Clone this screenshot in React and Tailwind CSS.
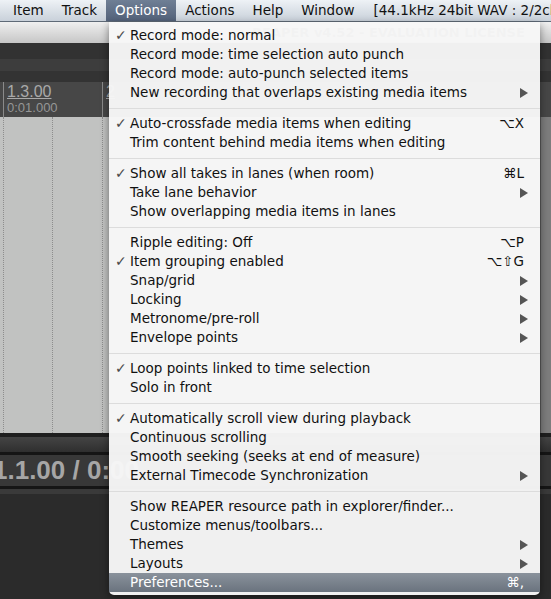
import React from "react";

const menuBar = ["Item", "Track", "Options", "Actions", "Help", "Window"];

// each entry: [label, checked, shortcut, hasSubmenu, active] ; "-" is a separator
const items = [
  ["Record mode: normal", true],
  ["Record mode: time selection auto punch"],
  ["Record mode: auto-punch selected items"],
  ["New recording that overlaps existing media items", false, null, true],
  "-",
  ["Auto-crossfade media items when editing", true, "⌥X"],
  ["Trim content behind media items when editing"],
  "-",
  ["Show all takes in lanes (when room)", true, "⌘L"],
  ["Take lane behavior", false, null, true],
  ["Show overlapping media items in lanes"],
  "-",
  ["Ripple editing: Off", false, "⌥P"],
  ["Item grouping enabled", true, "⌥⇧G"],
  ["Snap/grid", false, null, true],
  ["Locking", false, null, true],
  ["Metronome/pre-roll", false, null, true],
  ["Envelope points", false, null, true],
  "-",
  ["Loop points linked to time selection", true],
  ["Solo in front"],
  "-",
  ["Automatically scroll view during playback", true],
  ["Continuous scrolling"],
  ["Smooth seeking (seeks at end of measure)"],
  ["External Timecode Synchronization", false, null, true],
  "-",
  ["Show REAPER resource path in explorer/finder..."],
  ["Customize menus/toolbars..."],
  ["Themes", false, null, true],
  ["Layouts", false, null, true],
  ["Preferences...", false, "⌘,", false, true],
];

function Arrow({ light }) {
  return (
    <svg width="8" height="10" viewBox="0 0 8 10">
      <polygon points="0,0 8,5 0,10" fill={light ? "#fff" : "#555"} />
    </svg>
  );
}

function MenuRow({ item }) {
  const [label, checked, shortcut, sub, active] = item;
  return (
    <div
      className={
        "relative flex items-center h-[19px] pl-[21px] pr-[12px] " +
        (active
          ? "bg-gradient-to-b from-[#8a929c] to-[#6a737e] text-white"
          : "text-[#111]")
      }
    >
      {checked && (
        <span className="absolute left-[6px] top-[0px] text-[14px] text-[#4a4a4a]">
          ✓
        </span>
      )}
      <span className="flex-1 whitespace-nowrap">{label}</span>
      {shortcut && <span className="pr-[4px] whitespace-nowrap">{shortcut}</span>}
      {sub && <Arrow light={active} />}
    </div>
  );
}

export default function App() {
  return (
    <div className="relative w-[551px] h-[599px] overflow-hidden bg-[#2b2b2b] font-['DejaVu_Sans',sans-serif] text-[13.5px] leading-[19px]">
      {/* menu bar */}
      <div className="flex h-[22px] pl-[4px] bg-gradient-to-b from-[#eef2f6] to-[#c9d1da] border-b border-[#5f6a77] text-[#111] overflow-hidden">
        {menuBar.map((m) => (
          <div
            key={m}
            className={
              "px-[9px] h-[21px] flex items-center " +
              (m === "Options"
                ? "bg-gradient-to-b from-[#6f7f95] to-[#53627a] text-white"
                : "")
            }
          >
            {m}
          </div>
        ))}
        <div className="pl-[10px] h-[21px] flex items-center whitespace-nowrap">
          [44.1kHz 24bit WAV : 2/2ch]
        </div>
      </div>

      {/* title bar */}
      <div className="h-[21px] bg-gradient-to-b from-[#f0f0f0] to-[#c6c6c6] pl-[252px] flex items-center text-[13px] font-bold text-[#6a6a6a] whitespace-nowrap">
        REAPER v4.52 - EVALUATION LICENSE
      </div>

      {/* toolbars */}
      <div className="h-[16px] bg-[#323232]" />
      <div className="h-[12px] bg-[#3d3d3d]" />
      <div className="h-[11px] bg-[#333333]" />

      {/* ruler */}
      <div className="relative h-[35px] bg-[#474747] flex font-['Liberation_Sans',sans-serif] text-[#a9a9a9]">
        <div className="w-[3px]" />
        <div className="w-[99px] border-l border-[#8a8a8a] pl-[3px] pt-[2px] leading-[16px]">
          <div className="text-[16px] underline">1.3.00</div>
          <div className="text-[13px] text-[#969696]">0:01.000</div>
        </div>
        <div className="w-[20px] border-l border-[#8a8a8a] pl-[3px] pt-[2px] leading-[16px]">
          <div className="text-[16px] underline">2</div>
        </div>
      </div>

      {/* tracks */}
      <div className="flex h-[316px]">
        <div className="flex-1 bg-[#c1c2c1] flex">
          <div className="w-[3px]" />
          <div className="w-[49px] border-l border-dotted border-[#8d8d8d]" />
          <div className="w-[50px] border-l border-dotted border-[#8d8d8d]" />
          <div className="w-[10px] border-l border-dotted border-[#8d8d8d]" />
        </div>
        <div className="w-[11px] bg-[#7d7d7d] border-l border-[#5a5a5a]" />
      </div>

      {/* transport */}
      <div className="h-[4px] bg-[#1f1f1f]" />
      <div className="h-[15px] bg-gradient-to-b from-[#444] to-[#2f2f2f]" />
      <div className="h-[3px] bg-[#151515]" />
      <div className="h-[31px] bg-[#383838] flex items-center overflow-hidden">
        <span className="ml-[-7px] font-['Liberation_Sans',sans-serif] font-bold text-[26px] text-[#a6a6a6] whitespace-nowrap">
          1.1.00 / 0:00
        </span>
      </div>
      <div className="h-[3px] bg-[#161616]" />
      <div className="h-[5px] bg-[#3a3a3a]" />
      <div className="h-[120px] bg-[#2b2b2b]" />

      {/* Options dropdown */}
      <div className="absolute left-[109px] top-[22px] w-[431px] pt-[4px] pb-[3px] bg-[#f7f7f7]/[0.97] rounded-b-[5px] shadow-[0_3px_8px_rgba(0,0,0,0.45)]">
        {items.map((it, i) =>
          it === "-" ? (
            <div key={i} className="h-[12px] flex items-center">
              <div className="w-full h-px bg-[#dcdcdc]" />
            </div>
          ) : (
            <MenuRow key={i} item={it} />
          )
        )}
      </div>
    </div>
  );
}
